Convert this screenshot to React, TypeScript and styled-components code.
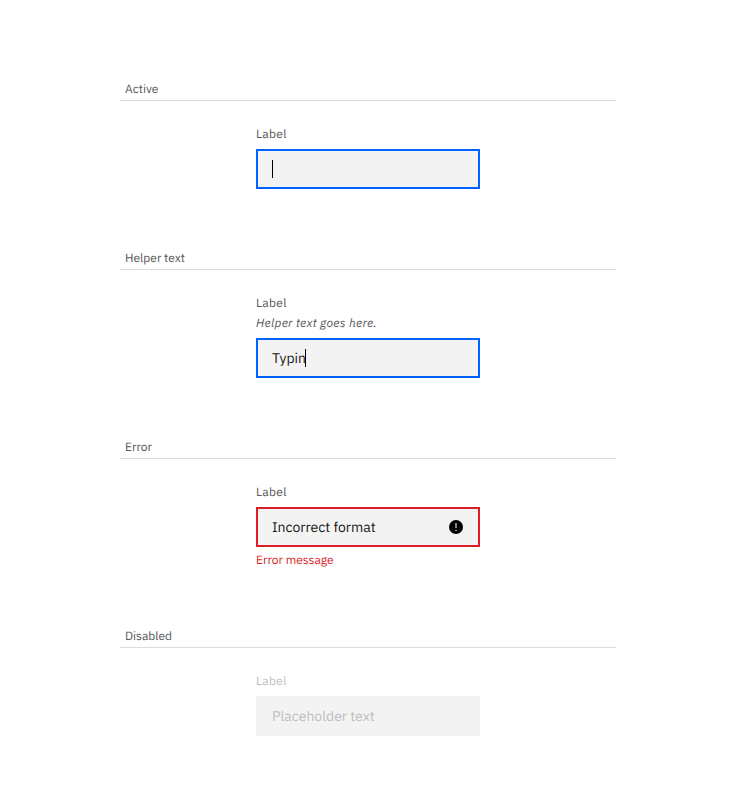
import React from "react";
import styled, { createGlobalStyle } from "styled-components";

const GlobalStyle = createGlobalStyle`
  * { box-sizing: border-box; }
  body {
    margin: 0;
    background: #fff;
    font-family: "IBM Plex Sans", Roboto, "Liberation Sans", sans-serif;
    -webkit-font-smoothing: antialiased;
    text-rendering: geometricPrecision;
  }
`;

const Page = styled.main`
  width: 736px;
  height: 800px;
  padding: 80px 120px 0;
`;

const Section = styled.section<{ $height: number }>`
  height: ${(p) => p.$height}px;
`;

const Heading = styled.h2`
  height: 21px;
  margin: 0;
  padding: 1px 5px 0;
  border-bottom: 1px solid #dcdcdc;
  color: #565656;
  font-size: 12px;
  font-weight: 400;
  line-height: 18px;
  letter-spacing: 0;
  white-space: nowrap;
`;

const Field = styled.div`
  width: 224px;
  margin: 25px auto 0;
  white-space: nowrap;
`;

const Label = styled.label<{ $disabled?: boolean }>`
  display: block;
  height: 23px;
  color: ${(p) => (p.$disabled ? "#bebebe" : "#565656")};
  font-size: 12px;
  line-height: 18px;
  letter-spacing: 0.32px;
`;

const Helper = styled.div`
  height: 20px;
  margin-top: -3px;
  margin-bottom: 3px;
  color: #565656;
  font-size: 12px;
  font-style: italic;
  line-height: 18px;
  letter-spacing: 0.32px;
`;

const states = { focus: "#0062ff", error: "#da1e28", disabled: "#f3f3f3" };

const Input = styled.div<{ $state: keyof typeof states }>`
  display: flex;
  align-items: center;
  height: 40px;
  padding: 0 15px 0 14px;
  border: 2px solid ${(p) => states[p.$state]};
  background: #f3f3f3;
`;

const Value = styled.span<{ $disabled?: boolean }>`
  color: ${(p) => (p.$disabled ? "#bebebe" : "#171717")};
  font-size: 14px;
  line-height: 18px;
  letter-spacing: 0;
`;

const Caret = styled.span<{ $after?: boolean }>`
  width: 1px;
  height: 18px;
  margin-left: ${(p) => (p.$after ? -1 : 0)}px;
  background: #000;
`;

const ErrorIcon = styled.svg`
  display: block;
  width: 14px;
  height: 14px;
  margin-left: auto;
`;

const ErrorMessage = styled.div`
  margin-top: 5px;
  color: #da1e28;
  font-size: 12px;
  line-height: 18px;
  letter-spacing: 0;
`;

export default function App() {
  return (
    <>
      <GlobalStyle />
      <Page>
        <Section $height={169}>
          <Heading>Active</Heading>
          <Field>
            <Label>Label</Label>
            <Input $state="focus">
              <Caret />
            </Input>
          </Field>
        </Section>
        <Section $height={189}>
          <Heading>Helper text</Heading>
          <Field>
            <Label>Label</Label>
            <Helper>Helper text goes here.</Helper>
            <Input $state="focus">
              <Value>Typin</Value>
              <Caret $after />
            </Input>
          </Field>
        </Section>
        <Section $height={189}>
          <Heading>Error</Heading>
          <Field>
            <Label>Label</Label>
            <Input $state="error">
              <Value>Incorrect format</Value>
              <ErrorIcon viewBox="0 0 14 14" aria-hidden="true">
                <circle cx="7" cy="7" r="7" fill="#000" />
                <path d="M7 3v5" stroke="#f3f3f3" strokeWidth="1.1" />
                <circle cx="7" cy="10.2" r="0.75" fill="#f3f3f3" />
              </ErrorIcon>
            </Input>
            <ErrorMessage>Error message</ErrorMessage>
          </Field>
        </Section>
        <Section $height={173}>
          <Heading>Disabled</Heading>
          <Field>
            <Label $disabled>Label</Label>
            <Input $state="disabled">
              <Value $disabled>Placeholder text</Value>
            </Input>
          </Field>
        </Section>
      </Page>
    </>
  );
}
